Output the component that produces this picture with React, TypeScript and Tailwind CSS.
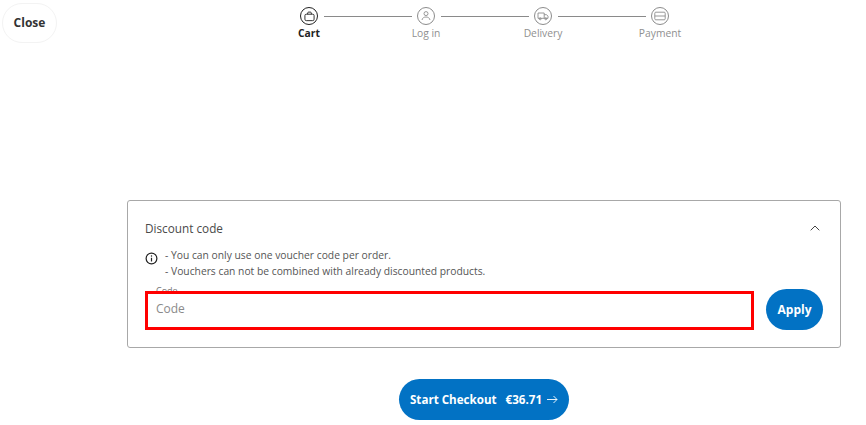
import React from "react";

const font = { fontFamily: '"Open Sans", sans-serif' };

function Circle({ active, children }: { active?: boolean; children: React.ReactNode }) {
  return (
    <div className={`flex h-[18px] w-[18px] shrink-0 items-center justify-center rounded-full border ${active ? "border-[#222222] text-[#222222]" : "border-[#8c8c8c] text-[#8c8c8c]"}`}>
      {children}
    </div>
  );
}

function Line() {
  return <div className="ml-[6px] mr-[5px] h-px w-[88px] shrink-0 bg-[#8a8a8a]" />;
}

function Step({ label, active, children }: { label: string; active?: boolean; children: React.ReactNode }) {
  return (
    <div className="relative flex h-[18px] w-[18px] shrink-0 justify-center">
      <Circle active={active}>{children}</Circle>
      <span className={`absolute left-1/2 top-[18px] -translate-x-1/2 whitespace-nowrap text-[10.3px] leading-[16px] ${active ? "font-bold text-[#222222]" : "text-[#8f8f8f]"}`}>
        {label}
      </span>
    </div>
  );
}

export default function App() {
  return (
    <div className="flex h-[425px] w-[866px] flex-col overflow-hidden bg-white text-[#444444]" style={font}>
      <header className="flex h-[200px] shrink-0 items-start">
        <button className="ml-[2px] mt-[3px] flex h-[40px] w-[55px] items-center justify-center rounded-full border border-[#f3f3f3] bg-white text-[12px] font-bold text-[#333333]">
          Close
        </button>
        <div className="ml-[243px] mt-[7px] flex items-center">
          <Step label="Cart" active>
            <svg width="11" height="11" viewBox="0 0 12 12" fill="none" stroke="currentColor" strokeWidth="1">
              <rect x="1" y="3.5" width="10" height="7" rx="1.5" />
              <path d="M4 3.5V2.2C4 1.6 4.5 1.2 5 1.2H7C7.5 1.2 8 1.6 8 2.2V3.5" />
            </svg>
          </Step>
          <Line />
          <Step label="Log in">
            <svg width="12" height="12" viewBox="0 0 12 12" fill="none" stroke="currentColor" strokeWidth="0.9">
              <circle cx="6" cy="3.6" r="2" />
              <path d="M2 10C2.4 7.9 4 7 6 7C8 7 9.6 7.9 10 10" />
            </svg>
          </Step>
          <Line />
          <Step label="Delivery">
            <svg width="12" height="12" viewBox="0 0 12 12" fill="none" stroke="currentColor" strokeWidth="0.9">
              <path d="M1 3H7.2V8.3H1Z" />
              <path d="M7.2 4.7H9.6L11 6.2V8.3H7.2" />
              <circle cx="3.2" cy="8.8" r="1" />
              <circle cx="8.8" cy="8.8" r="1" />
            </svg>
          </Step>
          <Line />
          <Step label="Payment">
            <svg width="12" height="12" viewBox="0 0 12 12" fill="none" stroke="currentColor" strokeWidth="0.9">
              <rect x="0.8" y="2.2" width="10.4" height="7.6" rx="1" />
              <path d="M0.8 6H11.2" />
            </svg>
          </Step>
        </div>
      </header>

      <section className="ml-[127px] h-[148px] w-[714px] shrink-0 rounded-[3px] border border-[#a8a8a8] bg-white pl-[17px] pr-[17px] pt-[18px]">
        <div className="flex h-[18px] items-center justify-between">
          <span className="text-[11.75px] leading-[18px] text-[#4a4a4a]">Discount code</span>
          <svg width="10" height="6" viewBox="0 0 10 6" fill="none" stroke="#444444" strokeWidth="1" className="mr-[3px]">
            <path d="M0.7 5.3L5 1L9.3 5.3" />
          </svg>
        </div>
        <div className="mt-[10px] flex items-start">
          <svg width="13" height="13" viewBox="0 0 14 14" fill="none" stroke="#222222" strokeWidth="1.3" className="mt-[5px] shrink-0">
            <circle cx="7" cy="7" r="5.8" />
            <path d="M7 6.2V10.2" />
            <path d="M7 3.6V5" />
          </svg>
          <div className="ml-[7px] text-[10.3px] leading-[16px] text-[#555555]">
            <p>- You can only use one voucher code per order.</p>
            <p>- Vouchers can not be combined with already discounted products.</p>
          </div>
        </div>
        <div className="mt-[10px] flex items-end">
          <div className="relative h-[39px] w-[609px] shrink-0 pl-[11px] text-[12px] leading-[36px] text-[#8a8a8a]">
            <span className="absolute left-[11px] top-[-6px] text-[9px] leading-[12px] text-[#777777]">Code</span>
            Code
            <div className="absolute inset-0 border-[3px] border-[#ff0000]" />
          </div>
          <button className="ml-[12px] h-[41px] w-[57px] rounded-full bg-[#0272c4] text-[12px] font-bold text-white">Apply</button>
        </div>
      </section>

      <div className="ml-[399px] mt-[31px]">
        <button className="flex h-[41px] w-[170px] items-center justify-center whitespace-nowrap rounded-full bg-[#0272c4] text-[11.6px] font-bold text-white">
          <span>Start Checkout</span>
          <span className="ml-[9px]">€36.71</span>
          <svg width="11" height="9" viewBox="0 0 11 9" fill="none" stroke="#ffffff" strokeWidth="0.9" className="ml-[5px]">
            <path d="M0 4.5H10M6.5 1L10 4.5L6.5 8" />
          </svg>
        </button>
      </div>
    </div>
  );
}
